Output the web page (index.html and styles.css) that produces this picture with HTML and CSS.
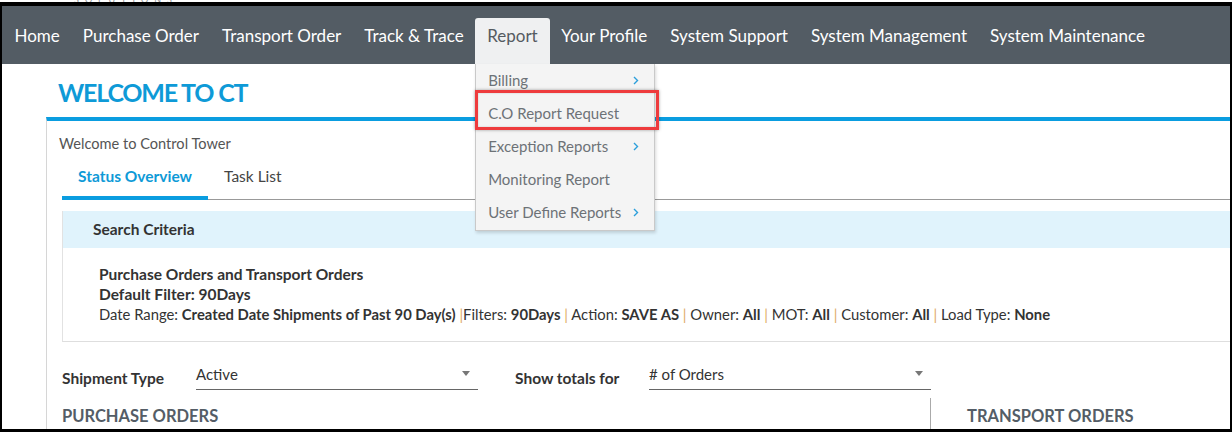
FILE: index.html
```html
<!DOCTYPE html>
<html>
<head>
<meta charset="utf-8">
<link rel="stylesheet" href="styles.css">
</head>
<body>
<div class="top-strip"><span class="logo-rest">SOLUTIONS</span></div>
<div class="frame">
  <nav class="nav">
    <a class="nav-item">Home</a>
    <a class="nav-item">Purchase Order</a>
    <a class="nav-item">Transport Order</a>
    <a class="nav-item">Track &amp; Trace</a>
    <div class="nav-item active">Report
      <div class="menu">
        <div class="menu-item">Billing <svg class="chev" width="6" height="9" viewBox="0 0 6 9"><polyline points="1,1 4.5,4.5 1,8" fill="none" stroke="#2b9fdb" stroke-width="1.4"/></svg></div>
        <div class="menu-item">C.O Report Request</div>
        <div class="menu-item">Exception Reports <svg class="chev" width="6" height="9" viewBox="0 0 6 9"><polyline points="1,1 4.5,4.5 1,8" fill="none" stroke="#2b9fdb" stroke-width="1.4"/></svg></div>
        <div class="menu-item">Monitoring Report</div>
        <div class="menu-item">User Define Reports <svg class="chev" width="6" height="9" viewBox="0 0 6 9"><polyline points="1,1 4.5,4.5 1,8" fill="none" stroke="#2b9fdb" stroke-width="1.4"/></svg></div>
        <div class="highlight"></div>
      </div>
    </div>
    <a class="nav-item">Your Profile</a>
    <a class="nav-item">System Support</a>
    <a class="nav-item">System Management</a>
    <a class="nav-item">System Maintenance</a>
  </nav>

  <h1 class="title">WELCOME TO CT</h1>

  <section class="panel">
    <div class="welcome">Welcome to Control Tower</div>
    <div class="tabs">
      <div class="tab tab-active">Status Overview</div>
      <div class="tab">Task List</div>
    </div>

    <div class="criteria">
      <div class="criteria-head">Search Criteria</div>
      <div class="criteria-body">
        <div class="strong">Purchase Orders and Transport Orders</div>
        <div class="strong">Default Filter: 90Days</div>
        <div class="summary">Date Range: <b>Created Date Shipments of Past 90 Day(s)</b> <span class="sep">|</span>Filters: <b>90Days</b> <span class="sep">|</span> Action: <b>SAVE AS</b> <span class="sep">|</span> Owner: <b>All</b> <span class="sep">|</span> MOT: <b>All</b> <span class="sep">|</span> Customer: <b>All</b> <span class="sep">|</span> Load Type: <b>None</b></div>
      </div>
    </div>

    <div class="filters">
      <div class="field">
        <span class="field-label">Shipment Type</span>
        <div class="select">Active<span class="caret"></span></div>
      </div>
      <div class="field">
        <span class="field-label">Show totals for</span>
        <div class="select"># of Orders<span class="caret"></span></div>
      </div>
    </div>

    <div class="columns">
      <div class="col col-left"><h2 class="col-title">PURCHASE ORDERS</h2></div>
      <div class="col col-right"><h2 class="col-title">TRANSPORT ORDERS</h2></div>
    </div>
  </section>
</div>
</body>
</html>
```

FILE: styles.css
```css
* { box-sizing: border-box; }
html, body { margin: 0; padding: 0; }
body {
  width: 1232px;
  height: 432px;
  overflow: hidden;
  background: #fff;
  font-family: Lato, "Open Sans", sans-serif;
  color: #333;
}
.top-strip {
  height: 2px;
  overflow: hidden;
  position: relative;
  padding-left: 74px;
}
.logo-rest {
  display: block;
  font-size: 9px;
  letter-spacing: 6px;
  color: #8a8f94;
  line-height: 4px;
  margin-top: -2px;
}
.frame {
  height: 430px;
  border-top: 4px solid #000;
  border-left: 2px solid #000;
  border-right: 2px solid #000;
  border-bottom: 3px solid #000;
  overflow: hidden;
  position: relative;
}
.nav {
  height: 58px;
  background: #535c64;
  display: flex;
  align-items: flex-end;
  padding-left: 1px;
  position: relative;
  z-index: 5;
}
.nav-item {
  height: 46px;
  line-height: 36px;
  padding: 0 11.5px;
  font-size: 17px;
  color: #fff;
  white-space: nowrap;
  position: relative;
}
.nav-item.active {
  background: #eff0f1;
  color: #555b61;
  border-radius: 3px 3px 0 0;
  padding: 0 12px;
}
.menu {
  position: absolute;
  top: 46px;
  left: 0;
  width: 180px;
  background: #f4f4f4;
  border: 1px solid #c9c9c9;
  border-top: none;
  box-shadow: 1px 2px 3px rgba(0,0,0,0.15);
  padding-bottom: 1px;
}
.menu-item {
  height: 33px;
  line-height: 33px;
  padding-left: 12px;
  font-size: 15px;
  color: #6d7277;
  display: flex;
  align-items: center;
  position: relative;
}
.chev {
  position: absolute;
  left: 157px;
  top: 12px;
}
.highlight {
  position: absolute;
  left: -1px;
  top: 26px;
  width: 184px;
  height: 40px;
  border: 3px solid #ee3b3d;
  box-shadow: 0 0 3px rgba(0,0,0,0.35), inset 0 0 2px rgba(0,0,0,0.2);
}
.title {
  margin: 13px 0 0 56px;
  height: 30px;
  line-height: 30px;
  font-size: 25px;
  font-weight: 700;
  color: #0e9ad7;
  letter-spacing: -1.2px;
}
.panel {
  margin: 10px 0 0 44px;
  border-top: 4px solid #0a9de0;
  border-left: 1px solid #d6d6d6;
  padding-left: 15px;
}
.welcome {
  margin: 14px 0 0 -3px;
  height: 18px;
  line-height: 18px;
  font-size: 14.6px;
  color: #555;
}
.tabs {
  display: flex;
  margin-top: 7px;
  border-bottom: 1px solid #999;
  height: 40px;
}
.tab {
  padding: 6px 16px 0;
  font-size: 15.5px;
  line-height: 20px;
  height: 39px;
  color: #444;
}
.tab-active {
  color: #0e9ad7;
  font-weight: 700;
  border-bottom: 4px solid #0a9de0;
  height: 40px;
  margin-bottom: -1px;
}
.criteria {
  margin-top: 11px;
  border-left: 1px solid #e2e2e2;
  border-bottom: 1px solid #dedede;
}
.criteria-head {
  height: 37px;
  line-height: 37px;
  background: #e0f3fc;
  padding-left: 30px;
  font-size: 15.5px;
  font-weight: 700;
  color: #333;
}
.criteria-body {
  padding: 16px 0 17px 36px;
  font-size: 15.5px;
  line-height: 20px;
  color: #333;
  white-space: nowrap;
}
.criteria-body .summary { font-size: 14.8px; }
.criteria-body b, .strong { font-weight: 700; }
.sep { color: #e0aa66; }
.filters {
  display: flex;
  margin-top: 22px;
  height: 34px;
}
.field {
  display: flex;
  align-items: flex-start;
  flex-shrink: 0;
}
.field + .field { margin-left: 37px; }
.field-label {
  font-size: 15.5px;
  font-weight: 700;
  color: #333;
  width: 134px;
  flex-shrink: 0;
  padding-top: 4px;
  line-height: 20px;
  white-space: nowrap;
}
.select {
  width: 282px;
  flex-shrink: 0;
  height: 26px;
  border-bottom: 1px solid #666;
  font-size: 15px;
  line-height: 18px;
  color: #333;
  position: relative;
  padding-top: 1px;
}
.caret {
  position: absolute;
  right: 8px;
  top: 7px;
  width: 0;
  height: 0;
  border-left: 4px solid transparent;
  border-right: 4px solid transparent;
  border-top: 5px solid #777;
}
.columns {
  display: flex;
}
.col-left {
  width: 869px;
  flex-shrink: 0;
  border-right: 1px solid #aaa;
  padding-top: 8px;
  height: 40px;
}
.col-right {
  padding-left: 36px;
  padding-top: 8px;
}
.col-title {
  margin: 0;
  font-size: 16.5px;
  font-weight: 700;
  color: #545d66;
  line-height: 20px;
  white-space: nowrap;
}
```
